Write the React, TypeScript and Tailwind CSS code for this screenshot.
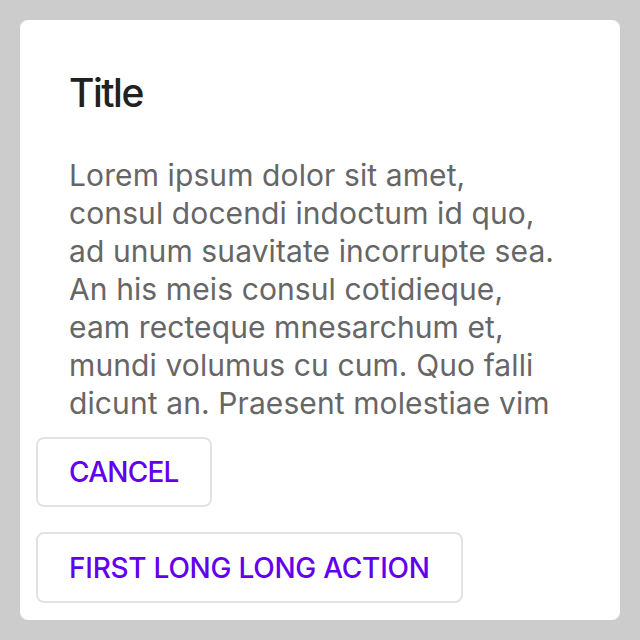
export default function App() {
  return (
    <div className="h-screen w-full bg-[#cccccc] p-5" style={{ fontFamily: "Inter, 'Noto Sans', sans-serif" }}>
      <div className="flex h-full flex-col rounded-lg bg-white">
        <h1 className="px-[49px] pt-[49px] text-[39px] leading-[48px] font-medium tracking-[-1.5px] text-[#212121]">
          Title
        </h1>
        <div className="mt-[39px] min-h-0 flex-1 overflow-hidden pr-[61px] pl-[49px]">
          <p className="text-[30px] leading-[38px] tracking-[0.1px] text-[#666666]">
            Lorem ipsum dolor sit amet, consul docendi indoctum id quo, ad unum suavitate incorrupte sea. An his meis
            consul cotidieque, eam recteque mnesarchum et, mundi volumus cu cum. Quo falli dicunt an. Praesent molestiae
            vim ut. Ne mea timeam vivendo, an eam prima dicant ornatus.
          </p>
        </div>
        <div className="flex flex-col items-start gap-[25px] px-4 pt-[14px] pb-[17px]">
          <button className="h-[70px] rounded-lg border-2 border-[#e2e2e2] px-[31px] text-[28px] font-medium tracking-[-0.75px] text-[#6200ee]">
            CANCEL
          </button>
          <button className="h-[71px] rounded-lg border-2 border-[#e2e2e2] px-[31px] text-[28px] font-medium tracking-[-0.25px] text-[#6200ee]">
            FIRST LONG LONG ACTION
          </button>
        </div>
      </div>
    </div>
  );
}
